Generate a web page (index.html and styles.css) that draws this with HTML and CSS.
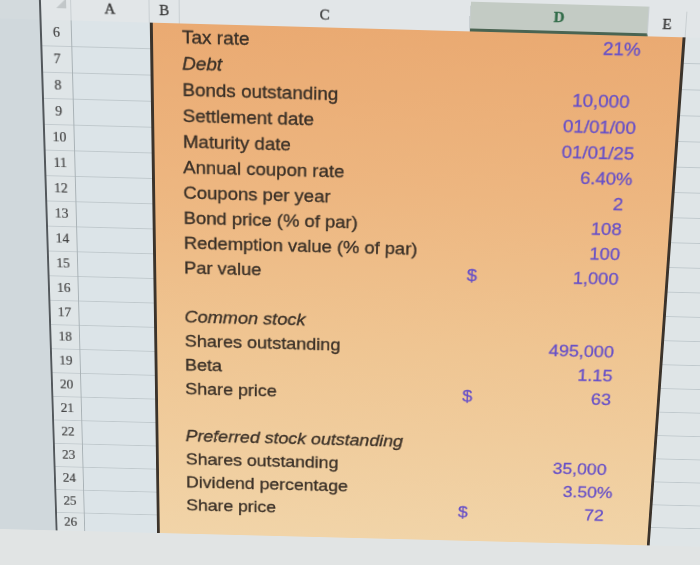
FILE: index.html
```html
<!DOCTYPE html>
<html lang="en">
<head>
    <meta charset="UTF-8">
    <meta name="viewport" content="width=device-width, initial-scale=1.0">
    <title>WACC inputs</title>
    <link rel="stylesheet" href="styles.css">
</head>
<body>
    <div class="sheet">
        <div class="colheads">
            <div class="ch gutter-head"></div>
            <div class="ch corner"><span class="corner-mark"></span></div>
            <div class="ch col-a">A</div>
            <div class="ch col-b">B</div>
            <div class="ch col-c">C</div>
            <div class="ch col-d selected">D</div>
            <div class="ch col-e">E</div>
            <div class="ch col-f"></div>
        </div>

        <div class="grid">
            <div class="gutter"></div>

            <div class="rownums">
                <div class="rn">6</div>
                <div class="rn">7</div>
                <div class="rn">8</div>
                <div class="rn">9</div>
                <div class="rn">10</div>
                <div class="rn">11</div>
                <div class="rn">12</div>
                <div class="rn">13</div>
                <div class="rn">14</div>
                <div class="rn">15</div>
                <div class="rn">16</div>
                <div class="rn">17</div>
                <div class="rn">18</div>
                <div class="rn">19</div>
                <div class="rn">20</div>
                <div class="rn">21</div>
                <div class="rn">22</div>
                <div class="rn">23</div>
                <div class="rn">24</div>
                <div class="rn">25</div>
                <div class="rn last">26</div>
            </div>

            <div class="cells col-a-cells">
                <div class="cell"></div><div class="cell"></div><div class="cell"></div>
                <div class="cell"></div><div class="cell"></div><div class="cell"></div>
                <div class="cell"></div><div class="cell"></div><div class="cell"></div>
                <div class="cell"></div><div class="cell"></div><div class="cell"></div>
                <div class="cell"></div><div class="cell"></div><div class="cell"></div>
                <div class="cell"></div><div class="cell"></div><div class="cell"></div>
                <div class="cell"></div><div class="cell"></div><div class="cell last"></div>
            </div>

            <div class="block">
                <div class="row"><span class="label">Tax rate</span><span class="cur"></span><span class="val">21%</span></div>
                <div class="row"><span class="label italic">Debt</span><span class="cur"></span><span class="val"></span></div>
                <div class="row"><span class="label">Bonds outstanding</span><span class="cur"></span><span class="val num">10,000</span></div>
                <div class="row"><span class="label">Settlement date</span><span class="cur"></span><span class="val">01/01/00</span></div>
                <div class="row"><span class="label">Maturity date</span><span class="cur"></span><span class="val">01/01/25</span></div>
                <div class="row"><span class="label">Annual coupon rate</span><span class="cur"></span><span class="val">6.40%</span></div>
                <div class="row"><span class="label">Coupons per year</span><span class="cur"></span><span class="val num">2</span></div>
                <div class="row"><span class="label">Bond price (% of par)</span><span class="cur"></span><span class="val num">108</span></div>
                <div class="row"><span class="label">Redemption value (% of par)</span><span class="cur"></span><span class="val num">100</span></div>
                <div class="row"><span class="label">Par value</span><span class="cur">$</span><span class="val num">1,000</span></div>
                <div class="row"><span class="label"></span><span class="cur"></span><span class="val"></span></div>
                <div class="row"><span class="label italic">Common stock</span><span class="cur"></span><span class="val"></span></div>
                <div class="row"><span class="label">Shares outstanding</span><span class="cur"></span><span class="val num">495,000</span></div>
                <div class="row"><span class="label">Beta</span><span class="cur"></span><span class="val num">1.15</span></div>
                <div class="row"><span class="label">Share price</span><span class="cur">$</span><span class="val num">63</span></div>
                <div class="row"><span class="label"></span><span class="cur"></span><span class="val"></span></div>
                <div class="row"><span class="label italic">Preferred stock outstanding</span><span class="cur"></span><span class="val"></span></div>
                <div class="row"><span class="label">Shares outstanding</span><span class="cur"></span><span class="val num">35,000</span></div>
                <div class="row"><span class="label">Dividend percentage</span><span class="cur"></span><span class="val">3.50%</span></div>
                <div class="row"><span class="label">Share price</span><span class="cur">$</span><span class="val num">72</span></div>
                <div class="row last"><span class="label"></span><span class="cur"></span><span class="val"></span></div>
            </div>

            <div class="cells col-f-cells">
                <div class="cell"></div><div class="cell"></div><div class="cell"></div>
                <div class="cell"></div><div class="cell"></div><div class="cell"></div>
                <div class="cell"></div><div class="cell"></div><div class="cell"></div>
                <div class="cell"></div><div class="cell"></div><div class="cell"></div>
                <div class="cell"></div><div class="cell"></div><div class="cell"></div>
                <div class="cell"></div><div class="cell"></div><div class="cell"></div>
                <div class="cell"></div><div class="cell"></div><div class="cell last"></div>
            </div>
        </div>

        <div class="statusbar"></div>
    </div>
</body>
</html>
```

FILE: styles.css
```css
* {
    margin: 0;
    padding: 0;
    box-sizing: border-box;
}

html, body {
    width: 700px;
    height: 565px;
    overflow: hidden;
}

body {
    background: #d8dee1;
    font-family: 'Liberation Sans', Arial, sans-serif;
}

/* the whole photographed screen, tilted a little */
.sheet {
    width: 820px;
    margin: -12px 0 0 -40px;
    display: flex;
    flex-direction: column;
    transform-origin: 458px 42px;
    transform: perspective(1000px) rotateX(-9deg) rotate(1.6deg);
}

/* column headers */
.colheads {
    display: flex;
    height: 42px;
    align-items: flex-end;
    background: #e2e6e8;
}

.ch {
    height: 26px;
    display: flex;
    align-items: center;
    justify-content: center;
    font-family: 'Liberation Serif', 'Times New Roman', serif;
    font-size: 15px;
    color: #333;
    border-right: 1px solid #c9cfd2;
    flex-shrink: 0;
    -webkit-text-stroke: 0.3px #333;
}

.gutter-head {
    width: 82px;
    height: 42px;
    background: #d3dadd;
    border-right: 2px solid #52575b;
}

.corner {
    width: 30px;
    position: relative;
}

.corner-mark {
    position: absolute;
    right: 4px;
    top: 4px;
    width: 0;
    height: 0;
    border-left: 10px solid transparent;
    border-bottom: 10px solid #c2c7c9;
}

.col-a { width: 78px; }
.col-b { width: 30px; }
.col-c { width: 290px; }
.col-e { width: 38px; }
.col-f { flex: 1; border-right: none; }

.col-d {
    width: 178px;
    height: 30px;
    background: #c3cbc4;
    color: #2f6a47;
    font-weight: bold;
    border-bottom: 3px solid #4a6452;
    -webkit-text-stroke: 0.3px #2f6a47;
}

/* body of the sheet */
.grid {
    display: flex;
}

.gutter {
    width: 82px;
    background: #d0d8dc;
    border-right: 2px solid #52575b;
    flex-shrink: 0;
}

.rownums {
    width: 30px;
    flex-shrink: 0;
    background: #dfe5e7;
    border-right: 1px solid #a9b2b6;
}

.rn {
    height: 27px;
    display: flex;
    align-items: center;
    justify-content: center;
    font-family: 'Liberation Serif', 'Times New Roman', serif;
    font-size: 14px;
    color: #444;
    border-bottom: 1px solid #c3cbcf;
    -webkit-text-stroke: 0.2px #444;
}

.rn.last,
.cell.last {
    height: 21px;
    border-bottom: none;
}

.cells {
    flex-shrink: 0;
    background: #dce4e8;
}

.col-a-cells {
    width: 78px;
}

.col-f-cells {
    flex: 1;
    background: #dfe5e7;
}

.cell {
    height: 27px;
    border-bottom: 1px solid #c0c9cd;
}

.block {
    width: 536px;
    flex-shrink: 0;
    background: linear-gradient(180deg, #eaaa72 0%, #edb680 30%, #efc592 60%, #f1d4a8 100%);
    border-left: 3px solid #3b332b;
    border-right: 3px solid #3b332b;
}

.row {
    height: 27px;
    display: grid;
    grid-template-columns: 29px 288px 178px 1fr;
    align-items: center;
    font-size: 19px;
    line-height: 27px;
}

.row.last {
    height: 21px;
}

.label {
    grid-column: 2;
    color: #3a3027;
    white-space: nowrap;
    -webkit-text-stroke: 0.35px #3a3027;
}

.italic {
    font-style: italic;
}

.cur,
.val {
    grid-column: 3;
    grid-row: 1;
    color: #6750c8;
    -webkit-text-stroke: 0.3px #6750c8;
}

.cur {
    justify-self: start;
    padding-left: 6px;
}

.val {
    justify-self: end;
    padding-right: 6px;
}

.val.num {
    padding-right: 14px;
}

.statusbar {
    height: 110px;
    background: #e1e4e4;
}
```
